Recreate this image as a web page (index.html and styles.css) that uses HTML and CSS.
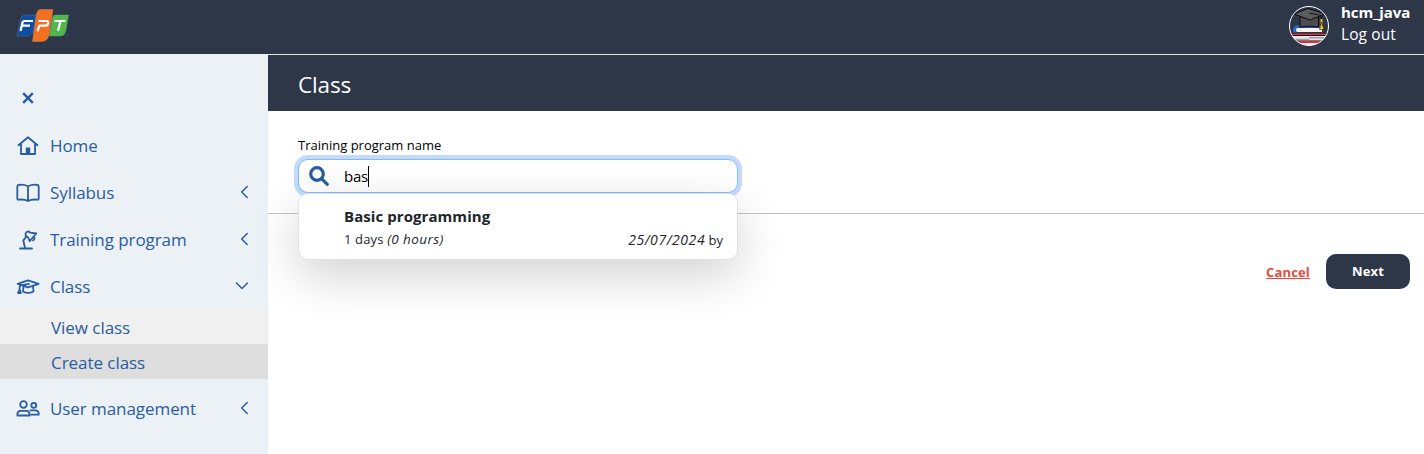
FILE: index.html
```html
<!DOCTYPE html>
<html lang="en">
<head>
<meta charset="utf-8">
<title>Class</title>
<link rel="stylesheet" href="styles.css">
</head>
<body>
<header class="topbar">
  <svg class="logo" width="56" height="36" viewBox="0 0 56 36">
    <path d="M8 7H20.500L17 23q-1 5-6 5H1L4 13q1-6 4-6Z" fill="#0f4da2" stroke="#667c9f" stroke-width=".4"/>
    <path d="M39 7H52.500L50 22q-1 6-6 6H33.500L36 12q.7-5 3-5Z" fill="#50b848" stroke="#7ba58a" stroke-width=".4"/>
    <path d="M24 1.500H37L33 27q-1.500 6.500-7.500 6.500H16.500L20 9q1-7.500 4-7.500Z" fill="#f37021" stroke="#c99a80" stroke-width=".4"/>
    <g fill="none" stroke="#fff" stroke-width="2.200" stroke-linejoin="round">
      <path d="M4.500 23L6.500 14.500q.5-1.500 2-1.500H17M6 17.700H14"/>
      <path d="M21.500 23L23.500 17.700H29.500q2 0 2.500-2.300t-1.500-2.400H22.500"/>
      <path d="M38.500 13H49.500M44.500 13L42 23"/>
    </g>
    <circle cx="51.500" cy="27" r="1.200" fill="#0f4da2"/>
  </svg>
  <div class="account">
    <svg class="avatar" width="40" height="40" viewBox="0 0 40 40">
      <defs><clipPath id="round"><circle cx="20" cy="20" r="19.500"/></clipPath></defs>
      <g clip-path="url(#round)">
        <path d="M0 27H40V40H0Z" fill="#0b0f18"/>
        <path d="M7 19.500H33V21.500H9q-3 3 0 5H4.500q-2.500-4 2.500-7" fill="#2c66c8"/>
        <path d="M8 22H33V26H8q-2-2 0-4" fill="#f3f3f3"/>
        <path d="M2 27.500H37V29H2Z" fill="#e33b43"/>
        <path d="M0 30H37V34.500H0Z" fill="#e4e6e9"/>
        <path d="M20 31H37V32.500H20ZM3 32.800H20V34H3Z" fill="#999ca3"/>
        <path d="M3 35H37V37H3Z" fill="#d92f3b"/>
        <path d="M8 37H36V40H8Z" fill="#e8e8e8"/>
        <path d="M11 11H29.500V21q-9-2-18.500 0Z" fill="#4d4d4f" stroke="#080c14"/>
        <path d="M5 8L19 2.500L36 8L21 14Z" fill="#5c5c5e" stroke="#080c14"/>
        <path d="M20 7L32.500 9.500V14" fill="none" stroke="#151515"/>
        <path d="M32.500 13V18" stroke="#ffc91b" stroke-width="1.800"/>
        <path d="M32.500 16L35 23.500H30.500Z" fill="#ffc91b" stroke="#27200e" stroke-width=".6"/>
      </g>
      <circle cx="20" cy="20" r="19.500" fill="none" stroke="#fff"/>
    </svg>
    <div class="account-text">
      <div class="username">hcm_java</div>
      <div class="logout">Log out</div>
    </div>
  </div>
</header>
<div class="shell">
  <nav class="sidebar">
    <svg class="close" width="12" height="12" viewBox="0 0 12 12"><path d="M1.200 1.200L10.800 10.800M10.800 1.200L1.200 10.800"/></svg>
    <div class="item">
      <svg class="icon" width="24" height="24" viewBox="0 0 24 24"><path d="M2.500 11.200L12 3.300L21.500 11.200M5 10V20H19V10"/><path class="solid" d="M9.800 20V13.500H14.200V20Z"/></svg>
      <span>Home</span>
    </div>
    <div class="item">
      <svg class="icon" width="24" height="24" viewBox="0 0 24 24"><path d="M12 5.200Q7 3 2.500 4Q1.300 4.200 1.300 5.500V17.500Q1.300 19 3 18.700Q8 18 12 20Q16 18 21 18.700Q22.700 19 22.700 17.500V5.500Q22.700 4.200 21.500 4Q17 3 12 5.200V20"/></svg>
      <span>Syllabus</span>
      <svg class="chevron" width="14" height="14" viewBox="0 0 14 14"><path d="M11.200 1.500L5.700 7L11.200 12.500"/></svg>
    </div>
    <div class="item">
      <svg class="icon" width="24" height="24" viewBox="0 0 24 24"><path d="M4 20.500H16M9 20L7.300 12.300L10.500 8.500"/><path d="M9.700 8L9.500 5.500Q10.500 3.300 13 3.500L14 4.700L20.300 5.500L13.700 13.200L12.300 9.500ZM17 12.500Q18.500 12 18.500 10"/></svg>
      <span>Training program</span>
      <svg class="chevron" width="14" height="14" viewBox="0 0 14 14"><path d="M11.200 1.500L5.700 7L11.200 12.500"/></svg>
    </div>
    <div class="item">
      <svg class="icon" width="24" height="24" viewBox="0 0 24 24"><path d="M1.700 8.800L12 5.300L22.700 8.800L12 12.300ZM13 8.800L5 10.300Q3.500 10.800 3.500 13V15L2 18H4.800L3.500 14M7.500 11.500L7 16.500Q12 19.300 17.500 16.500L17 11.500"/></svg>
      <span>Class</span>
      <svg class="chevron down" width="14" height="14" viewBox="0 0 14 14"><path d="M1.500 4L7 9.500L12.500 4"/></svg>
    </div>
    <div class="submenu">
      <div class="subitem"><span>View class</span></div>
      <div class="subitem active"><span>Create class</span></div>
    </div>
    <div class="item">
      <svg class="icon" width="24" height="24" viewBox="0 0 24 24"><circle cx="7.500" cy="7.500" r="3.300"/><circle cx="17.800" cy="8.300" r="2.500"/><path d="M1.400 18.500V17Q1.400 14 4.500 13.800H10.500Q13.600 14 13.600 17V18.500ZM14.500 13.300H19.500Q22.700 13.500 22.700 16.500V17.700H15.500"/></svg>
      <span>User management</span>
      <svg class="chevron" width="14" height="14" viewBox="0 0 14 14"><path d="M11.200 1.500L5.700 7L11.200 12.500"/></svg>
    </div>
  </nav>
  <main class="main">
    <h1 class="title">Class</h1>
    <section class="search">
      <div class="label">Training program name</div>
      <div class="field">
        <svg class="magnifier" width="20" height="20" viewBox="0 0 20 20"><circle cx="8" cy="8" r="6.300"/><path d="M12.800 12.800L18.300 18.300"/></svg>
        <span class="query">bas</span><i class="caret"></i>
        <div class="dropdown">
          <div class="result">Basic programming</div>
          <div class="meta">
            <span class="duration">1 days <em>(0 hours)</em></span>
            <span class="date"><em>25/07/2024</em> by</span>
          </div>
        </div>
      </div>
    </section>
    <div class="actions">
      <a class="cancel">Cancel</a>
      <button class="next">Next</button>
    </div>
  </main>
</div>
</body>
</html>
```
FILE: styles.css
```css
* { box-sizing: border-box; }
body {
  margin: 0;
  height: 454px;
  overflow: hidden;
  font-family: "Open Sans", "Noto Sans", sans-serif;
  color: #000;
  background: #fff;
}
span, a { white-space: nowrap; }
.topbar {
  height: 54px;
  display: flex;
  justify-content: space-between;
  padding: 0 14px 0 16px;
  background: #2d3748;
}
.logo { margin-top: 8px; }
.account { display: flex; gap: 12px; }
.avatar { margin-top: 6px; }
.account-text { width: 69px; padding-top: 1px; color: #fff; font-size: 15px; line-height: 22px; white-space: nowrap; }
.username { font-weight: 700; letter-spacing: -.07px; }
.logout { font-size: 15.5px; letter-spacing: .1px; }
.shell { display: flex; height: 400px; }
.sidebar { width: 268px; flex: none; padding-top: 38px; background: #ecf1f6; color: #285d9f; }
.close { display: block; margin: 0 0 18px 22px; fill: none; stroke: #285d9f; stroke-width: 2.4; }
.item {
  height: 47px;
  display: flex;
  align-items: center;
  padding: 0 18px 1px 16px;
  gap: 10px;
  font-size: 17px;
  letter-spacing: -.07px;
}
.icon, .chevron { flex: none; fill: none; stroke: #285d9f; stroke-width: 1.8; stroke-linejoin: round; stroke-linecap: round; }
.icon { margin-top: 1px; }
.icon .solid { fill: #285d9f; stroke: none; }
.chevron { margin-left: auto; stroke-width: 1.5; }
.down { position: relative; left: -1px; }
.submenu { margin: -1px 0 6px; background: #f0f0f0; }
.subitem { height: 35px; display: flex; align-items: center; padding: 2px 0 0 51px; font-size: 17px; letter-spacing: -.05px; }
.active { background: #dedede; }
.main { flex: 1; min-width: 0; border-top: 1px solid #dfe5e5; }
.title {
  height: 56px;
  margin: 0;
  padding-left: 30px;
  background: #2d3748;
  color: #fff;
  font-size: 22.5px;
  font-weight: 400;
  letter-spacing: -.15px;
  line-height: 59px;
}
.search { height: 103px; padding: 24px 0 0 30px; border-bottom: 1px solid #c0c0c0; }
.label { height: 24px; font-size: 13px; line-height: 21px; }
.field {
  position: relative;
  display: flex;
  align-items: center;
  width: 440px;
  height: 34px;
  padding: 0 10px;
  border: 1px solid #86b7fe;
  border-radius: 10px;
  background: #fff;
  box-shadow: 0 0 0 4px #c2dbfe;
  font-size: 15px;
}
.magnifier { flex: none; margin-right: 15px; fill: none; stroke: #285d9f; stroke-width: 3.2; stroke-linecap: round; }
.query { letter-spacing: -.3px; }
.caret { width: 1px; height: 21px; background: #000; }
.dropdown {
  position: absolute;
  top: 33px;
  left: -1px;
  width: 440px;
  height: 67px;
  padding: 11px 14px 0 45px;
  border: 1px solid #dee2e6;
  border-radius: 10px;
  background: #fff;
  box-shadow: 0 16px 48px rgba(0, 0, 0, .176);
  color: #212529;
}
.result { font-weight: 700; letter-spacing: .07px; line-height: 22px; }
.meta { display: flex; justify-content: space-between; padding-top: 1px; font-size: 13px; line-height: 23px; }
.duration { letter-spacing: .15px; }
.duration em { font-size: 13.5px; letter-spacing: .4px; }
.date em { font-size: 14px; letter-spacing: .55px; }
.actions { display: flex; justify-content: flex-end; align-items: center; gap: 16px; padding: 40px 14px 0 0; }
.cancel { color: #e74a3b; font-size: 13px; font-weight: 700; letter-spacing: .15px; text-decoration: underline; }
.next {
  width: 84px;
  height: 35px;
  padding: 0 0 2px;
  border: 0;
  border-radius: 10px;
  background: #2d3748;
  color: #fff;
  font: 700 13px "Open Sans", sans-serif;
  letter-spacing: .2px;
}
```
